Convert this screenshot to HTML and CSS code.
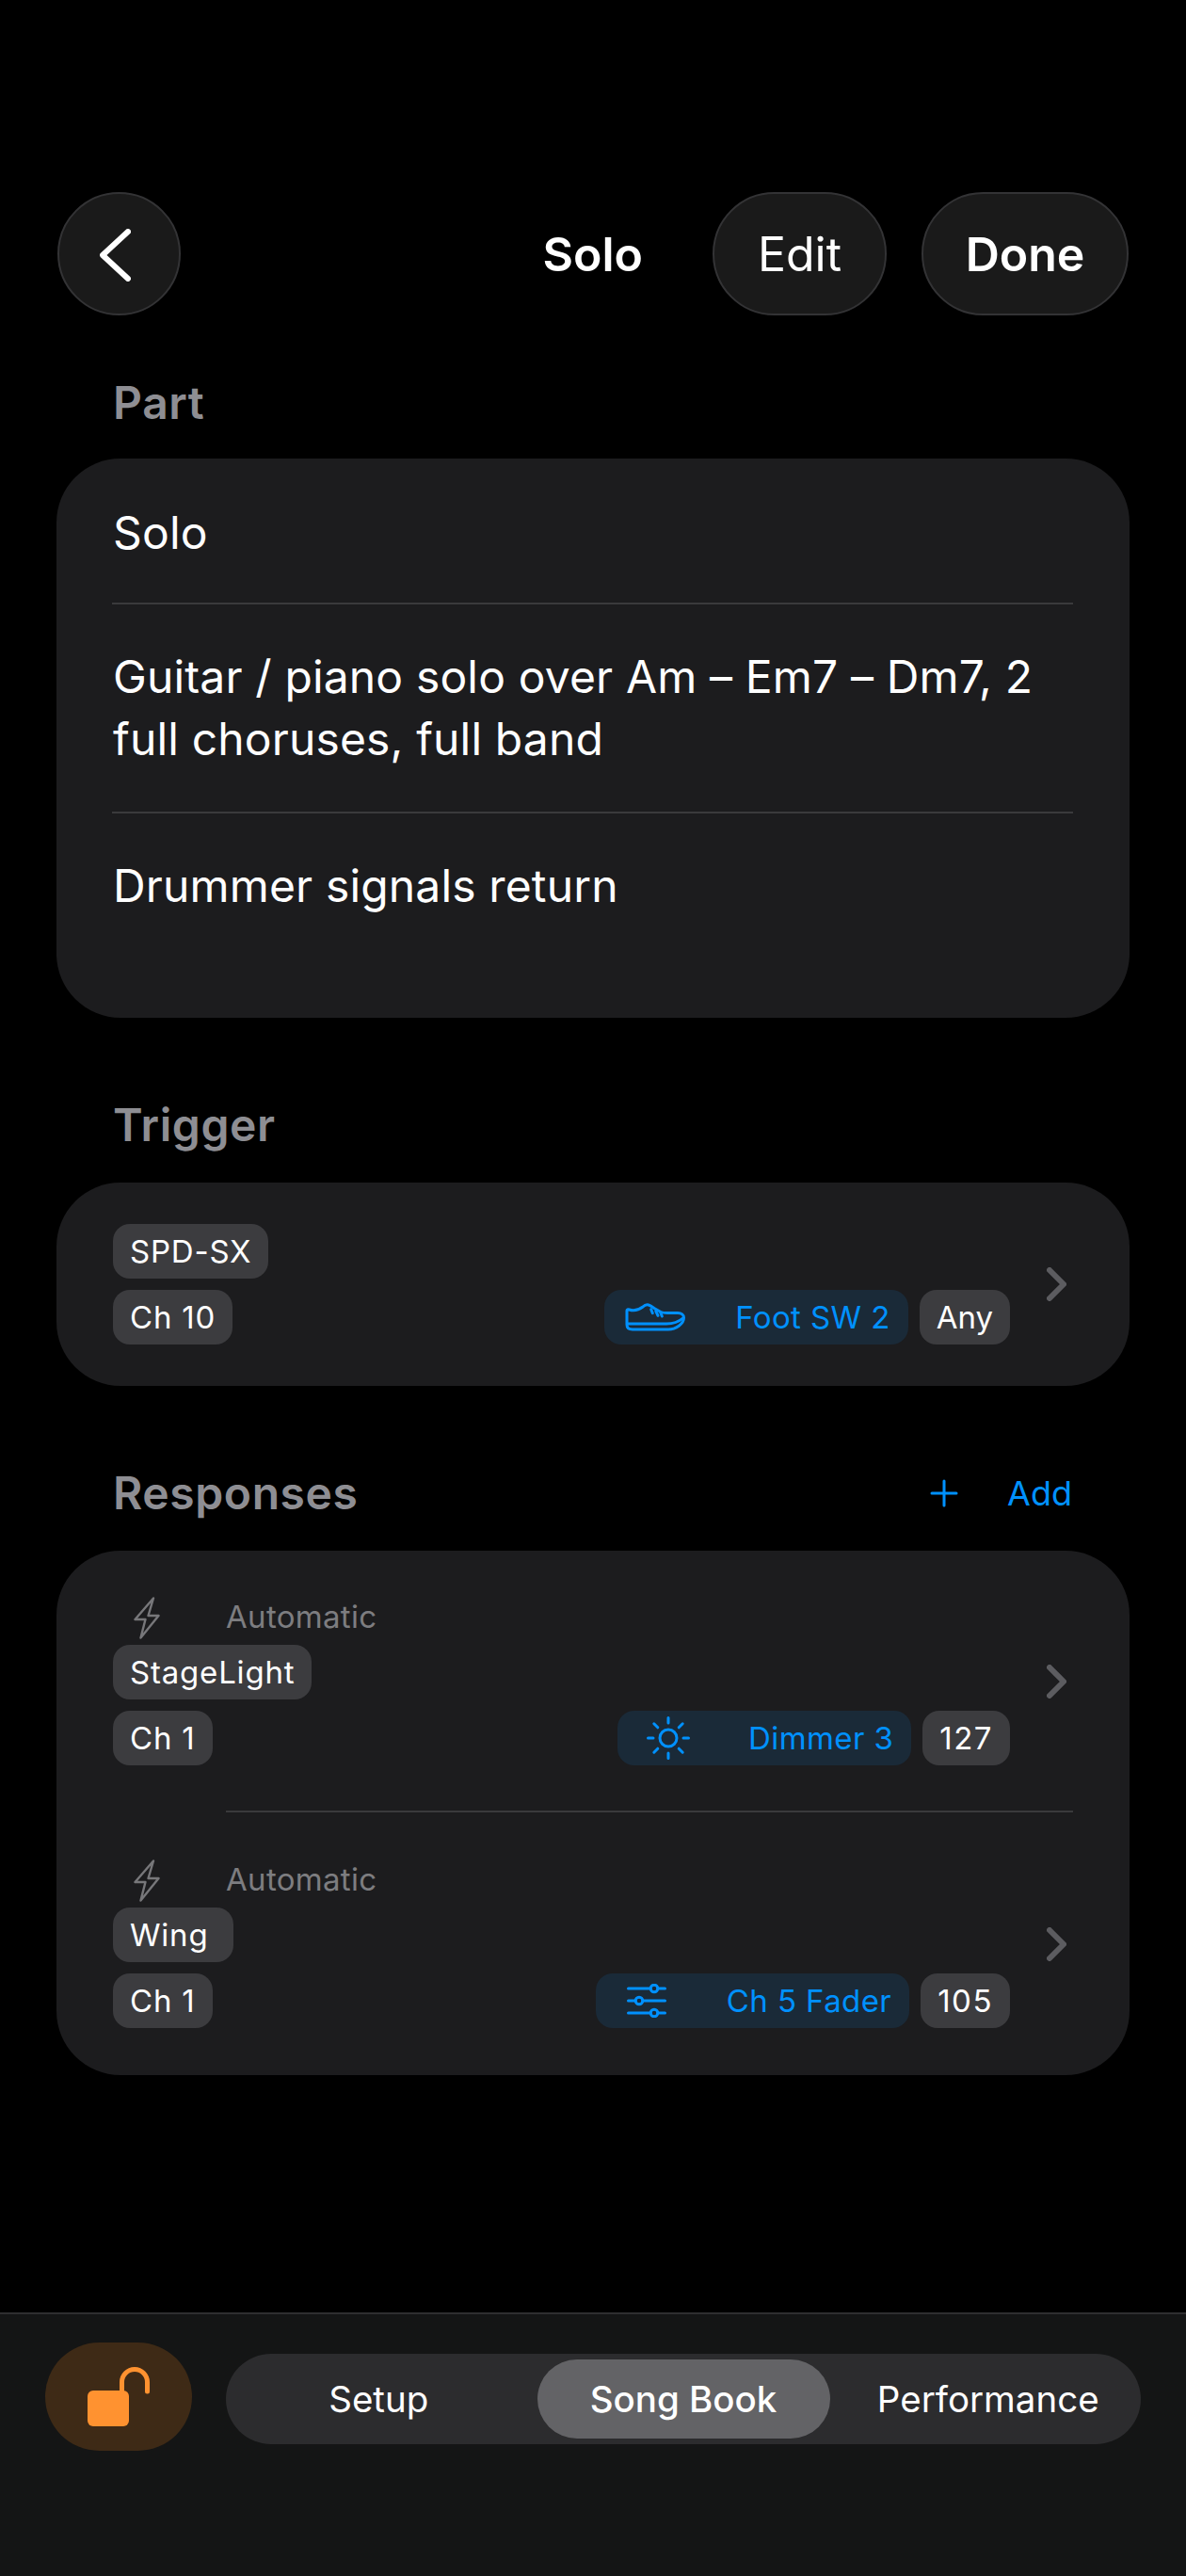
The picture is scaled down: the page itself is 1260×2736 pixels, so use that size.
FILE: index.html
```html
<!DOCTYPE html>
<html lang="en">

<head>
    <meta charset="UTF-8">
    <meta name="viewport" content="width=device-width, initial-scale=1.0">
    <title>Solo</title>
    <link rel="stylesheet" href="styles.css">
</head>

<body>
    <div class="screen">
        <header class="top-bar">
            <button class="round-btn back-btn" aria-label="Back">
                <svg width="33" height="56" viewBox="0 0 33 56" fill="none" stroke="#fff" stroke-width="6" stroke-linecap="round" stroke-linejoin="round">
                    <path d="M30 3 L3 28 L30 53"/>
                </svg>
            </button>
            <h1 class="title">Solo</h1>
            <button class="round-btn edit-btn">Edit</button>
            <button class="round-btn done-btn">Done</button>
        </header>

        <main class="content">
            <h2 class="section-label">Part</h2>
            <div class="card part-card">
                <div class="part-row">Solo</div>
                <div class="part-row">Guitar / piano solo over Am – Em7 – Dm7, 2 full choruses, full band</div>
                <div class="part-row">Drummer signals return</div>
            </div>

            <h2 class="section-label">Trigger</h2>
            <div class="card trigger-card">
                <div class="link-row">
                    <div class="link-body">
                        <div class="badge-line"><span class="badge">SPD-SX</span></div>
                        <div class="badge-line">
                            <span class="badge">Ch 10</span>
                            <div class="badge-group">
                                <span class="badge badge-blue">
                                    <span class="badge-icon">
                                        <!-- shoe -->
                                        <svg width="64" height="30" viewBox="0 0 64 30" fill="none" stroke="#0091ff" stroke-width="3" stroke-linecap="round" stroke-linejoin="round">
                                            <path d="M2 8 C2 7 3 6.5 4.5 7 C10 9 15 7 19 4 C21 2 23 1.5 25 2 C27 2.5 29 4 31 5.5 L38 9.5 C40 10.5 42 10.5 45 10.5 L56 10.5 C60 10.5 62.5 12.5 62.5 15.5 C62.5 22 54 28 46 28 L8 28 C4 28 2 26 2 23 Z"/>
                                            <path d="M3 22 H44 C50 22 57 20 61.5 16"/>
                                            <path d="M27.7 6.7 L29.3 10.7 M32.7 8.3 L35 13.3 M37.7 10 L39.3 14"/>
                                        </svg>
                                    </span>
                                    Foot SW 2
                                </span>
                                <span class="badge badge-value">Any</span>
                            </div>
                        </div>
                    </div>
                    <svg class="chevron" width="21" height="36" viewBox="0 0 21 36" fill="none" stroke="#5c5c60" stroke-width="6" stroke-linecap="round" stroke-linejoin="round">
                        <path d="M3 3 L18 18 L3 33"/>
                    </svg>
                </div>
            </div>

            <div class="section-head">
                <h2 class="section-label">Responses</h2>
                <a class="add-link">
                    <svg width="30" height="30" viewBox="0 0 30 30" fill="none" stroke="#0091ff" stroke-width="3" stroke-linecap="round">
                        <path d="M15 2 V28 M2 15 H28"/>
                    </svg>
                    Add
                </a>
            </div>
            <div class="card response-card">
                <div class="link-row response-row">
                    <div class="link-body">
                        <div class="auto-line">
                            <svg class="bolt" width="28" height="45" viewBox="0 0 28 45" fill="none" stroke="#77777a" stroke-width="2.4" stroke-linecap="round" stroke-linejoin="round">
                                <path d="M21 1.5 L1.5 24 H12.5 L7.5 43.5 L26.5 20 H15.5 Z"/>
                            </svg>
                            <span class="auto-text">Automatic</span>
                        </div>
                        <div class="badge-line"><span class="badge">StageLight</span></div>
                        <div class="badge-line">
                            <span class="badge">Ch 1</span>
                            <div class="badge-group">
                                <span class="badge badge-blue">
                                    <span class="badge-icon">
                                        <!-- sun -->
                                        <svg width="46" height="46" viewBox="0 0 46 46" fill="none" stroke="#0091ff" stroke-width="3" stroke-linecap="round">
                                            <circle cx="23" cy="23" r="9"/>
                                            <path d="M23 1.5 V7 M23 39 V44.5 M1.5 23 H7 M39 23 H44.5 M7.8 7.8 L11.8 11.8 M34.2 34.2 L38.2 38.2 M38.2 7.8 L34.2 11.8 M11.8 34.2 L7.8 38.2"/>
                                        </svg>
                                    </span>
                                    Dimmer 3
                                </span>
                                <span class="badge badge-num">127</span>
                            </div>
                        </div>
                    </div>
                    <svg class="chevron" width="21" height="36" viewBox="0 0 21 36" fill="none" stroke="#5c5c60" stroke-width="6" stroke-linecap="round" stroke-linejoin="round">
                        <path d="M3 3 L18 18 L3 33"/>
                    </svg>
                </div>
                <div class="link-row response-row response-row-last">
                    <div class="link-body">
                        <div class="auto-line">
                            <svg class="bolt" width="28" height="45" viewBox="0 0 28 45" fill="none" stroke="#77777a" stroke-width="2.4" stroke-linecap="round" stroke-linejoin="round">
                                <path d="M21 1.5 L1.5 24 H12.5 L7.5 43.5 L26.5 20 H15.5 Z"/>
                            </svg>
                            <span class="auto-text">Automatic</span>
                        </div>
                        <div class="badge-line"><span class="badge badge-wide">Wing</span></div>
                        <div class="badge-line">
                            <span class="badge">Ch 1</span>
                            <div class="badge-group">
                                <span class="badge badge-blue">
                                    <span class="badge-icon">
                                        <!-- faders -->
                                        <svg width="42" height="36" viewBox="0 0 42 36" fill="none" stroke="#0091ff" stroke-width="3" stroke-linecap="round">
                                            <path d="M1.5 5 H25 M33 5 H40.5 M1.5 18 H9 M17 18 H40.5 M1.5 31 H25 M33 31 H40.5"/>
                                            <circle cx="29" cy="5" r="3.8"/>
                                            <circle cx="13" cy="18" r="3.8"/>
                                            <circle cx="29" cy="31" r="3.8"/>
                                        </svg>
                                    </span>
                                    Ch 5 Fader
                                </span>
                                <span class="badge badge-num">105</span>
                            </div>
                        </div>
                    </div>
                    <svg class="chevron" width="21" height="36" viewBox="0 0 21 36" fill="none" stroke="#5c5c60" stroke-width="6" stroke-linecap="round" stroke-linejoin="round">
                        <path d="M3 3 L18 18 L3 33"/>
                    </svg>
                </div>
            </div>
        </main>

        <nav class="bottom-bar">
            <button class="lock-btn" aria-label="Unlocked">
                <svg width="66" height="63" viewBox="0 0 66 63" fill="none">
                    <rect x="0" y="25" width="44" height="38" rx="6" fill="#ff9230"/>
                    <path d="M36.5 27 V16 A13.5 13.5 0 0 1 63.5 16 V26" stroke="#ff9230" stroke-width="5" stroke-linecap="round"/>
                </svg>
            </button>
            <div class="segments">
                <div class="segment">Setup</div>
                <div class="segment segment-active">Song Book</div>
                <div class="segment">Performance</div>
            </div>
        </nav>
    </div>
</body>

</html>
```

FILE: styles.css
```css
body {
    font-family: Inter, "Noto Sans", sans-serif;
    background-color: #000;
    color: #fff;
    margin: 0;
}

.screen {
    width: 1260px;
    height: 2736px;
    display: flex;
    flex-direction: column;
    overflow: hidden;
}

.top-bar {
    display: flex;
    align-items: center;
    padding: 204px 61px 0;
}

.round-btn {
    height: 131px;
    background-color: #1a1a1a;
    border: 2px solid #333335;
    border-radius: 66px;
    color: #fff;
    font-family: inherit;
    font-size: 50px;
    padding: 0;
}

.back-btn {
    width: 131px;
    margin-right: auto;
    display: flex;
    align-items: center;
    justify-content: center;
}

.back-btn svg {
    margin-right: 8px;
    margin-top: 2px;
}

.title {
    margin: 0 74px 0 0;
    font-size: 50px;
    font-weight: 600;
}

.edit-btn {
    width: 185px;
    margin-right: 37px;
}

.done-btn {
    width: 220px;
    font-weight: 600;
}

.content {
    padding: 67px 60px 0;
}

.section-label {
    margin: 0 0 35px;
    padding-left: 60px;
    font-size: 48px;
    line-height: 52px;
    font-weight: 600;
    letter-spacing: 0.6px;
    color: #8e8e93;
}

.section-label:first-child {
    margin-bottom: 33px;
}

.section-head .section-label:first-child {
    margin-bottom: 35px;
}

.card {
    background-color: #1c1c1e;
    border-radius: 68px;
    margin-bottom: 88px;
}

.part-card {
    padding: 2px 60px 63px 59px;
}

.part-row {
    padding: 44px 0 44px 1px;
    font-size: 48px;
    line-height: 66px;
    letter-spacing: 0.15px;
    border-bottom: 2px solid #3a3a3c;
}

.part-row:first-child {
    padding-bottom: 41px;
}

.part-row:last-child {
    border-bottom: none;
}

.trigger-card {
    padding: 44px 67px 44px 60px;
}

.link-row {
    display: flex;
    align-items: center;
    gap: 39px;
}

.link-body {
    flex: 1;
    display: flex;
    flex-direction: column;
    gap: 12px;
}

.badge-line {
    display: flex;
    justify-content: space-between;
}

.badge-group {
    display: flex;
    gap: 12px;
}

.badge {
    display: flex;
    align-items: center;
    height: 58px;
    padding: 0 18px;
    background-color: #3c3c3f;
    border-radius: 18px;
    font-size: 33px;
    letter-spacing: 0.8px;
}

.badge-blue {
    background-color: #1a2a38;
    color: #0091ff;
    padding: 0 19px 0 22px;
    letter-spacing: 0.4px;
}

.badge-value {
    letter-spacing: 0;
}

.badge-num {
    letter-spacing: 1.5px;
}

.badge-icon {
    width: 64px;
    margin-right: 53px;
    display: flex;
    justify-content: center;
}

.badge-wide {
    padding-right: 27px;
}

.section-head {
    display: flex;
    justify-content: space-between;
    align-items: flex-start;
}

.add-link {
    display: flex;
    align-items: center;
    gap: 52px;
    padding-right: 61px;
    height: 52px;
    font-size: 36px;
    color: #0091ff;
}

.response-card {
    padding: 0 60px;
}

.response-row {
    padding: 49px 7px 48px 0;
    position: relative;
}

.response-row-last {
    padding: 52px 7px 50px 0;
}

.response-row-last::before {
    content: "";
    position: absolute;
    top: 0;
    left: 120px;
    right: 0;
    height: 2px;
    background-color: #3a3a3c;
}

.auto-line {
    display: flex;
    align-items: center;
    height: 45px;
    padding-left: 22px;
    margin-bottom: -6px;
}

.auto-text {
    margin-left: 70px;
    padding-bottom: 3px;
    font-size: 33px;
    color: #7d7d80;
    letter-spacing: 0.3px;
}

.bottom-bar {
    margin-top: auto;
    height: 248px;
    background-color: #141515;
    border-top: 2px solid #2e2e30;
    padding: 30px 48px 0;
    display: flex;
    align-items: flex-start;
    gap: 36px;
}

.lock-btn {
    width: 156px;
    height: 115px;
    border: none;
    padding: 0;
    background-color: #3e2a16;
    border-radius: 58px;
    display: flex;
    align-items: center;
    justify-content: center;
}

.segments {
    flex: 1;
    height: 96px;
    margin-top: 12px;
    box-sizing: border-box;
    padding: 6px 0;
    background-color: #2c2c2e;
    border-radius: 48px;
    display: flex;
}

.segment {
    flex: 1;
    display: flex;
    align-items: center;
    justify-content: center;
    font-size: 38.5px;
}

.segment-active {
    flex: 0 0 311px;
    margin: 0 6px;
    background-color: #636366;
    border-radius: 42px;
    font-weight: 500;
}
```
